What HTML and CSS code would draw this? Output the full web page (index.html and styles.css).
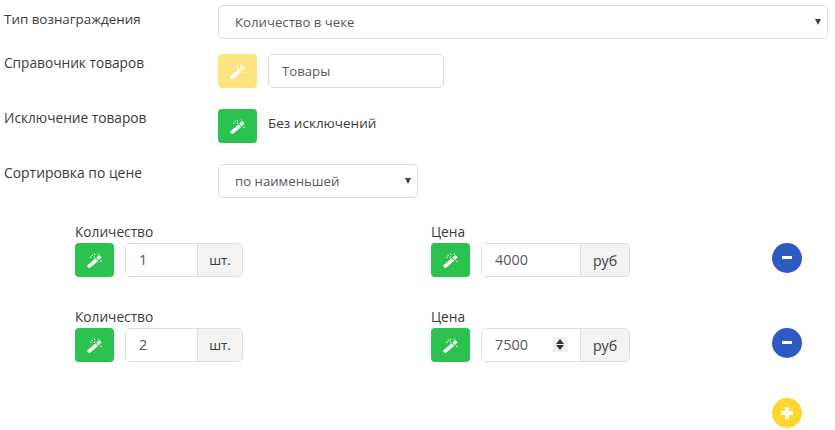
FILE: index.html
```html
<!DOCTYPE html>
<html lang="ru">
<head>
<meta charset="utf-8">
<title>Тип вознаграждения</title>
<link rel="stylesheet" href="styles.css">
</head>
<body>
<svg class="defs" width="0" height="0" aria-hidden="true">
  <symbol id="wand" viewBox="0 0 14 14">
    <path d="M.4 11.500 8 4.900l2.400 2.500-7.500 6.400a1 1 0 0 1-1.300 0l-1.200-1.200a.8.8 0 0 1 0-1.100z" fill="#fff"/>
    <path d="M8.700 4.300 11 2.400c.4-.3.800-.3 1.100 0l1.100 1.100c.3.300.3.700 0 1l-2.200 2.200z" fill="#fff"/>
    <path d="M4.300 1.600h1.300v1.300H4.300zM6.600.8h1.100v1.100H6.600zM3 3.600h1.100v1.100H3zM6.400 3.300h1.100v1.100H6.400zM12.400 7.200h1.200v1.200h-1.200zM10 .4h1v1h-1z" fill="#fff"/>
  </symbol>
</svg>
<main class="form">
  <div class="row">
    <label class="row-label row-label-first">Тип вознаграждения</label>
    <div class="select select-wide"><span>Количество в чеке</span><i class="caret"></i></div>
  </div>
  <div class="row row-catalog">
    <label class="row-label">Справочник товаров</label>
    <button class="wand wand-yellow"><svg><use href="#wand"/></svg></button>
    <div class="field field-catalog">Товары</div>
  </div>
  <div class="row row-except">
    <label class="row-label">Исключение товаров</label>
    <button class="wand"><svg><use href="#wand"/></svg></button>
    <span class="plain">Без исключений</span>
  </div>
  <div class="row row-sort">
    <label class="row-label row-label-sort">Сортировка по цене</label>
    <div class="select select-narrow"><span>по наименьшей</span><i class="caret"></i></div>
  </div>

  <div class="tier">
    <div class="tier-col tier-qty">
      <div class="tier-label">Количество</div>
      <div class="tier-controls">
        <button class="wand"><svg><use href="#wand"/></svg></button>
        <div class="group"><div class="group-input qty-input">1</div><div class="addon qty-addon">шт.</div></div>
      </div>
    </div>
    <div class="tier-col tier-price">
      <div class="tier-label">Цена</div>
      <div class="tier-controls">
        <button class="wand"><svg><use href="#wand"/></svg></button>
        <div class="group"><div class="group-input price-input">4000</div><div class="addon price-addon">руб</div></div>
      </div>
    </div>
    <button class="round round-blue"><i class="bar"></i></button>
  </div>

  <div class="tier">
    <div class="tier-col tier-qty">
      <div class="tier-label">Количество</div>
      <div class="tier-controls">
        <button class="wand"><svg><use href="#wand"/></svg></button>
        <div class="group"><div class="group-input qty-input">2</div><div class="addon qty-addon">шт.</div></div>
      </div>
    </div>
    <div class="tier-col tier-price">
      <div class="tier-label">Цена</div>
      <div class="tier-controls">
        <button class="wand"><svg><use href="#wand"/></svg></button>
        <div class="group">
          <div class="group-input price-input">7500
            <span class="spin"><i class="spin-up"></i><i class="spin-down"></i></span>
          </div>
          <div class="addon price-addon">руб</div>
        </div>
      </div>
    </div>
    <button class="round round-blue"><i class="bar"></i></button>
  </div>

  <div class="add-row">
    <button class="round round-yellow"><i class="bar"></i><i class="bar bar-v"></i></button>
  </div>
</main>
</body>
</html>
```
FILE: styles.css
```css
* { box-sizing: border-box; }
html, body { margin: 0; padding: 0; }
body {
  width: 835px;
  height: 430px;
  overflow: hidden;
  background: #fff;
  color: #3b3b3b;
  font-family: "Open Sans", "Noto Sans", sans-serif;
  font-size: 13.4px;
}
.defs { position: absolute; }
.form { padding: 5px 7px 0 4px; }
.row { display: flex; align-items: flex-start; }
.row-label { width: 214px; flex: none; line-height: 18px; font-size: 13.7px; }
.row-label-first { padding-top: 5px; font-size: 13.4px; }
.row-label-sort { font-size: 13.9px; }
.row-catalog { margin-top: 15px; }
.row-except { margin-top: 21px; }
.row-sort { margin-top: 21px; }

.select, .field {
  height: 34px;
  border: 1px solid #dedede;
  border-radius: 5px;
  background: #fff;
  color: #5a5560;
  font-size: 13.2px;
  display: flex;
  align-items: center;
  padding-left: 16px;
  position: relative;
}
.select-wide { width: 610px; }
.select-narrow { width: 200px; }
.field-catalog { width: 176px; margin-left: 11px; padding-left: 13px; }
.caret {
  position: absolute;
  right: 6px;
  top: 13px;
  border-left: 3px solid transparent;
  border-right: 3px solid transparent;
  border-top: 6px solid #444;
}
.plain { margin-left: 11px; line-height: 28px; font-size: 13.5px; }

.wand {
  width: 39px;
  height: 34px;
  flex: none;
  border: 0;
  padding: 0;
  border-radius: 4px;
  background: #2bc24f;
  display: flex;
  align-items: center;
  justify-content: center;
}
.wand svg { width: 15px; height: 15px; }
.wand-yellow { background: #fde47e; }

.tier { display: flex; align-items: flex-start; padding-left: 71px; margin-top: 25px; height: 60px; }
.tier-label { line-height: 18px; margin-bottom: 2px; font-size: 13.7px; }
.tier-qty { width: 356px; }
.tier-price { width: 341px; }
.tier-controls { display: flex; gap: 11px; }
.group { display: flex; height: 34px; border: 1px solid #dedede; border-radius: 5px; overflow: hidden; }
.group-input { display: flex; align-items: center; padding-left: 13px; padding-bottom: 1px; color: #5a5560; background: #fff; position: relative; font-size: 14.4px; }
.qty-input { width: 71px; }
.price-input { width: 98px; }
.addon { display: flex; align-items: center; justify-content: center; background: #f3f3f3; border-left: 1px solid #dedede; }
.qty-addon { width: 45px; }
.price-addon { width: 49px; font-size: 14.2px; }
.spin { position: absolute; left: 71px; top: 8px; width: 15px; height: 15px; background: #f0f0f0; }
.spin-up, .spin-down { position: absolute; left: 3px; border-left: 4.5px solid transparent; border-right: 4.5px solid transparent; }
.spin-up { top: 2px; border-bottom: 5px solid #333; }
.spin-down { bottom: 2px; border-top: 5px solid #333; }

.round {
  width: 30px;
  height: 30px;
  border: 0;
  padding: 0;
  border-radius: 50%;
  position: relative;
  flex: none;
  margin-top: 20px;
}
.round-blue { background: #2e5bc2; }
.round-yellow { background: #fdd630; margin-top: 0; display: block; }
.bar { position: absolute; left: 10px; top: 13px; width: 10px; height: 3px; background: #fff; }
.round-yellow .bar { left: 9px; top: 13px; width: 12px; height: 4px; }
.round-yellow .bar-v { left: 13px; top: 9px; width: 4px; height: 12px; }
.add-row { padding-left: 768px; margin-top: 30px; }
```
